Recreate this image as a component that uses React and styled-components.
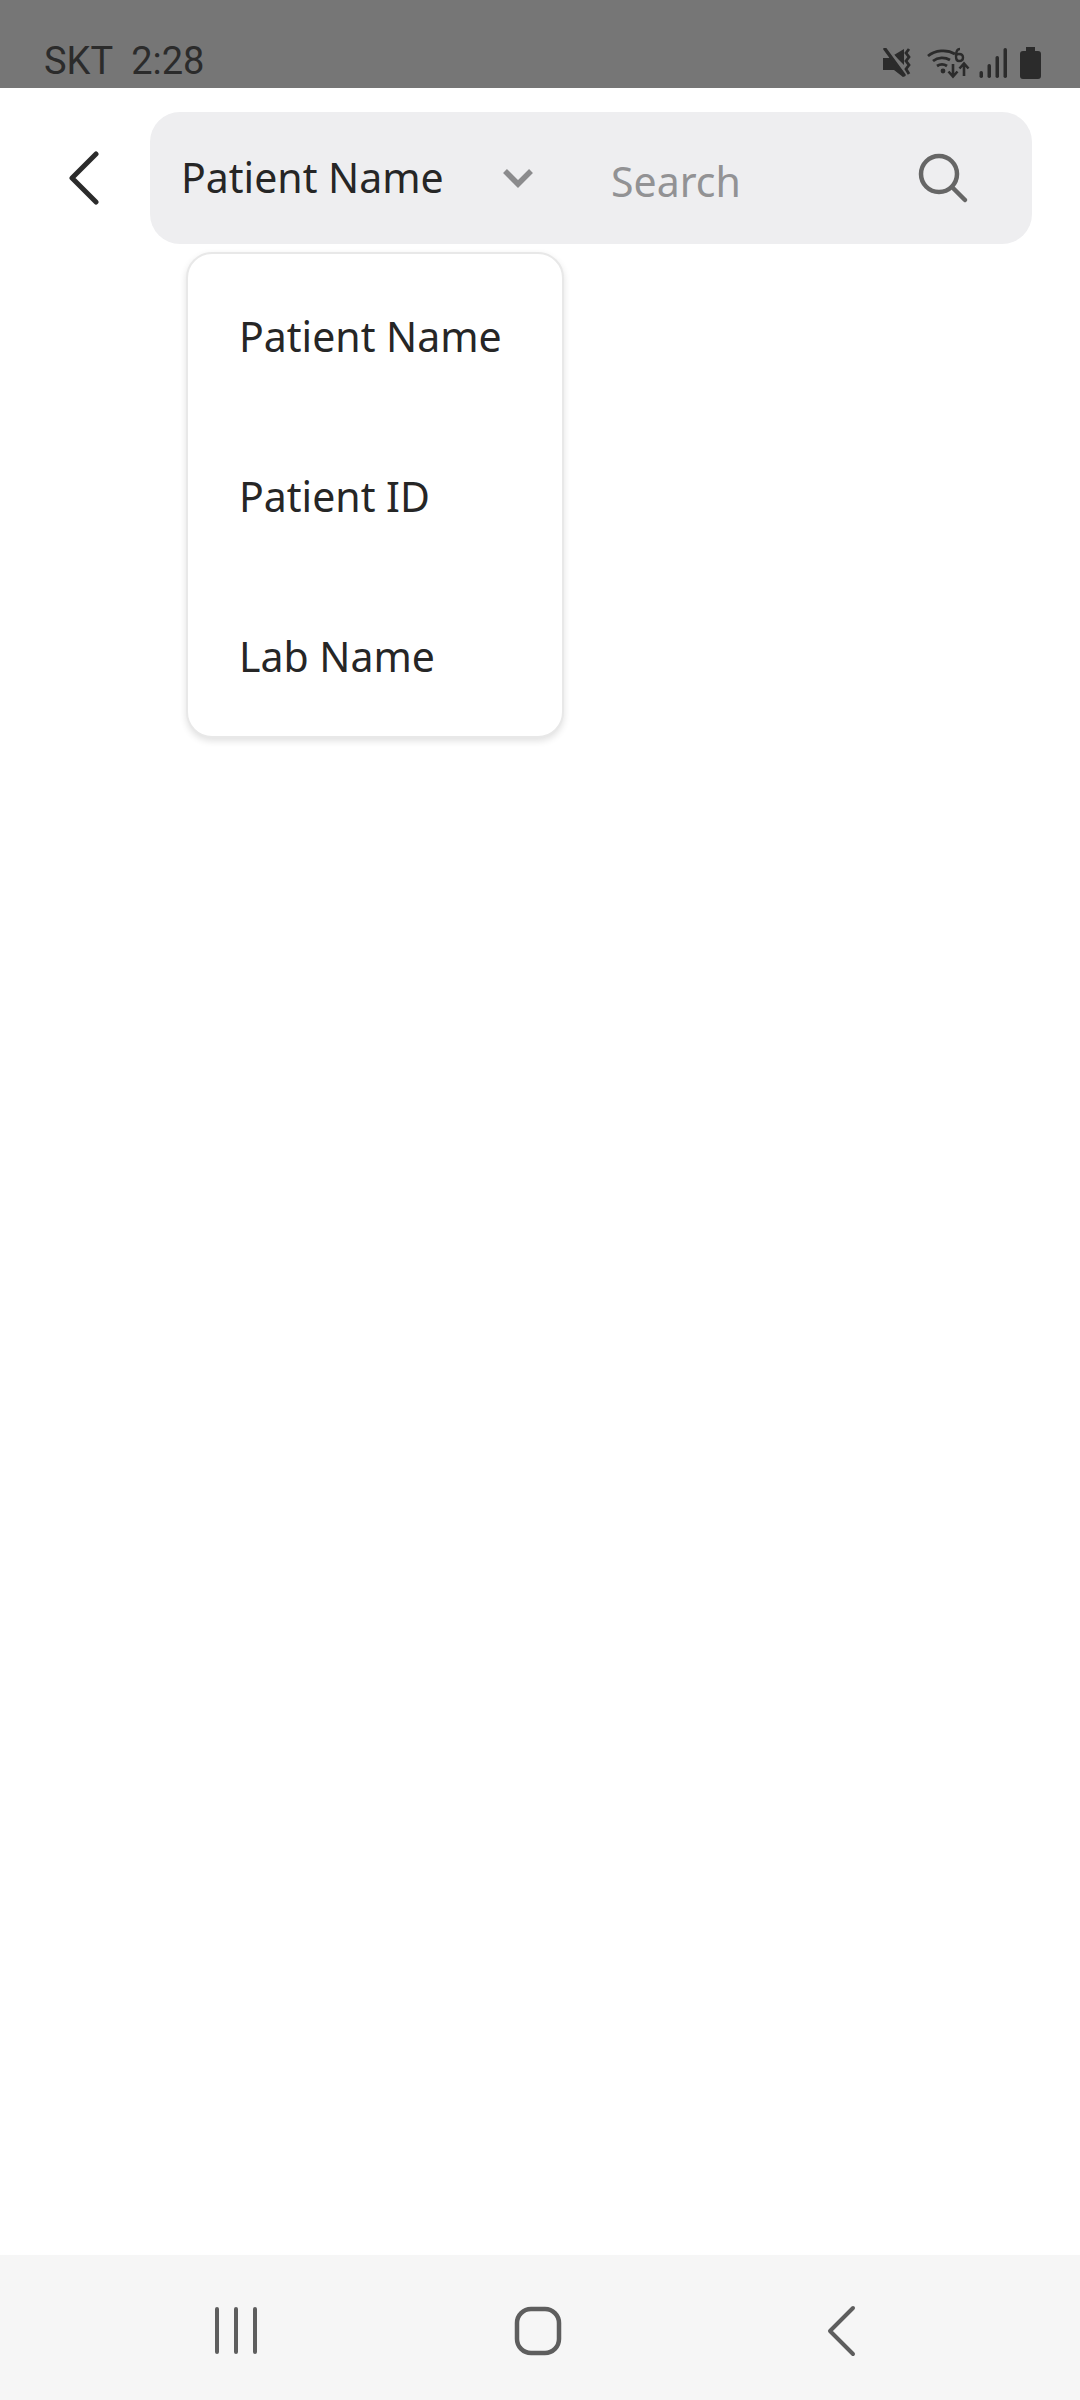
import React from "react";
import styled, { createGlobalStyle } from "styled-components";

const Global = createGlobalStyle`
  html, body { margin: 0; padding: 0; background: #fff; }
  * { box-sizing: border-box; }
`;

const Page = styled.div`
  width: 1080px;
  height: 2400px;
  display: flex;
  flex-direction: column;
  background: #fff;
  font-family: "Noto Sans", "Open Sans", sans-serif;
  overflow: hidden;
`;

const StatusBar = styled.div`
  height: 88px;
  flex: none;
  background: #767676;
  display: flex;
  align-items: flex-end;
  justify-content: space-between;
  padding: 0 39px 4px 44px;
  color: #2b2b2b;
`;

const Carrier = styled.div`
  font-family: Roboto, sans-serif;
  font-size: 38px;
  line-height: 46px;
  white-space: pre;
`;

const StatusIcons = styled.div`
  display: flex;
  align-items: center;
  height: 34px;
  margin-bottom: 4px;
`;

const StatusIcon = styled.svg`
  display: block;
  flex: none;
  margin-left: ${(p) => p.$gap || 0}px;
`;

const Header = styled.header`
  display: flex;
  align-items: center;
  padding: 24px 48px 0 69px;
  flex: none;
`;

const BackButton = styled.button`
  width: 81px;
  height: 60px;
  padding: 0;
  flex: none;
  border: 0;
  background: none;
  display: flex;
  align-items: center;
`;

const SearchBox = styled.div`
  position: relative;
  width: 882px;
  height: 132px;
  flex: none;
  background: #eeeef0;
  border-radius: 30px;
  display: flex;
  align-items: center;
  padding-left: 31px;
`;

const Selected = styled.div`
  width: 320px;
  flex: none;
  display: flex;
  align-items: center;
  font-size: 41px;
  line-height: 56px;
  margin-top: -2px;
  color: #262626;
  white-space: nowrap;
`;

const SelectedLabel = styled.span`
  width: 320px;
  flex: none;
`;

const Caret = styled.svg`
  flex: none;
  display: block;
  margin-top: 2px;
`;

const SearchLabel = styled.span`
  margin-left: 110px;
  padding-top: 6px;
  font-size: 41px;
  color: #929294;
  width: 306px;
  flex: none;
`;

const Dropdown = styled.ul`
  position: absolute;
  left: 36px;
  top: 140px;
  width: 378px;
  height: 486px;
  margin: 0;
  padding: 2px 0;
  list-style: none;
  background: #fff;
  border-radius: 26px;
  border: 2px solid #e8e8e8;
  box-shadow: 0 3px 7px rgba(0, 0, 0, 0.12);
`;

const Option = styled.li`
  height: 160px;
  padding-left: 51px;
  display: flex;
  align-items: center;
  font-size: 41px;
  color: #262626;
`;

const Content = styled.main`
  flex: 1;
`;

const NavBar = styled.nav`
  height: 145px;
  flex: none;
  background: #f6f6f6;
  display: flex;
  align-items: center;
  padding: 7px 0 0 213px;
`;

const NavIcon = styled.svg`
  display: block;
  flex: none;
  margin-left: ${(p) => p.$gap || 0}px;
`;

export default function App() {
  return (
    <Page>
      <Global />
      <StatusBar>
        <Carrier>SKT  2:28</Carrier>
        <StatusIcons>
          <StatusIcon width="30" height="30" viewBox="0 0 30 30">
            <path d="M0 10h6l2-2 13 17v3l-1 1-9-7H0z" fill="#2b2b2b" />
            <path d="M11 7l10-6v16z" fill="#2b2b2b" />
            <path d="M5 1l19 25" stroke="#767676" strokeWidth="3" />
            <path d="M2 1l19 26" stroke="#2b2b2b" strokeWidth="3.400" strokeLinecap="round" />
            <path d="M26 1l-3 4 3 4-3 4 3 4-3 4 3 5" fill="none" stroke="#2b2b2b" strokeWidth="2.800" />
          </StatusIcon>
          <StatusIcon $gap={14} width="43" height="32" viewBox="0 0 43 32">
            <path d="M1 9C8 3 20 2 28 7" fill="none" stroke="#2b2b2b" strokeWidth="2.800" />
            <path d="M6 14c5-4 12-4 17-1" fill="none" stroke="#2b2b2b" strokeWidth="2.800" />
            <path d="M10 19c3-2 7-2 10 0" fill="none" stroke="#2b2b2b" strokeWidth="2.800" />
            <circle cx="16" cy="24" r="2.400" fill="#2b2b2b" />
            <path d="M33 2c-3 0-4 3-4 7s1 5 3 5 4-1 4-3.500-2-3.500-4-3.500-3 1-3 2" fill="none" stroke="#2b2b2b" strokeWidth="2.400" />
            <path d="M26 17v12M21.500 24.500l4.500 5 4.500-5" fill="none" stroke="#2b2b2b" strokeWidth="2.600" />
            <path d="M37 29V17M32.500 21.500l4.500-5 4.500 5" fill="none" stroke="#2b2b2b" strokeWidth="2.600" />
          </StatusIcon>
          <StatusIcon $gap={9} width="28" height="30" viewBox="0 0 28 30">
            <rect x="0.500" y="23" width="3.500" height="7" rx="1.700" fill="#2b2b2b" />
            <rect x="8.500" y="16" width="3.500" height="14" rx="1.700" fill="#2b2b2b" />
            <rect x="16.500" y="8" width="3.500" height="22" rx="1.700" fill="#2b2b2b" />
            <rect x="24.500" y="0" width="3.500" height="30" rx="1.700" fill="#2b2b2b" />
          </StatusIcon>
          <StatusIcon $gap={13} width="21" height="32" viewBox="0 0 21 32">
            <path d="M6 0h9v4h3a3 3 0 0 1 3 3v22a3 3 0 0 1-3 3H3a3 3 0 0 1-3-3V7a3 3 0 0 1 3-3h3z" fill="#2b2b2b" />
          </StatusIcon>
        </StatusIcons>
      </StatusBar>

      <Header>
        <BackButton aria-label="Back">
          <svg width="30" height="54" viewBox="0 0 30 54">
            <path d="M27 3L3 27l24 24" fill="none" stroke="#2b2b2b" strokeWidth="5" strokeLinecap="round" strokeLinejoin="round" />
          </svg>
        </BackButton>
        <SearchBox>
          <Selected>
            <SelectedLabel>Patient Name</SelectedLabel>
            <Caret width="34" height="22" viewBox="0 0 34 22">
              <path d="M4 4l13 13L30 4" fill="none" stroke="#8b8b8d" strokeWidth="5.500" />
            </Caret>
          </Selected>
          <SearchLabel>Search</SearchLabel>
          <svg width="52" height="52" viewBox="0 0 52 52">
            <circle cx="22" cy="22" r="18" fill="none" stroke="#666" strokeWidth="4.500" />
            <path d="M35 35l13 13" stroke="#666" strokeWidth="4.500" strokeLinecap="round" />
          </svg>
          <Dropdown>
            <Option>Patient Name</Option>
            <Option>Patient ID</Option>
            <Option>Lab Name</Option>
          </Dropdown>
        </SearchBox>
      </Header>

      <Content />

      <NavBar>
        <NavIcon width="46" height="50" viewBox="0 0 46 50">
          <path d="M4 3v43M23 3v43M42 3v43" stroke="#5e5e5e" strokeWidth="4" strokeLinecap="round" />
        </NavIcon>
        <NavIcon $gap={254} width="50" height="50" viewBox="0 0 50 50">
          <rect x="4" y="3" width="42" height="44" rx="14" fill="none" stroke="#5e5e5e" strokeWidth="4.500" />
        </NavIcon>
        <NavIcon $gap={263} width="30" height="52" viewBox="0 0 30 52">
          <path d="M27 3L4 26l23 23" fill="none" stroke="#5e5e5e" strokeWidth="4" strokeLinecap="round" strokeLinejoin="round" />
        </NavIcon>
      </NavBar>
    </Page>
  );
}
